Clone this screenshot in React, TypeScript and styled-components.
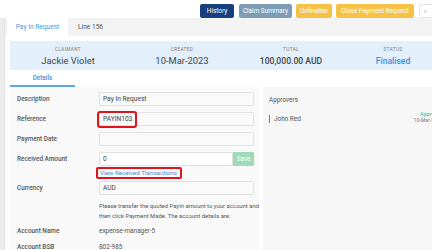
import React from "react";
import styled, { createGlobalStyle } from "styled-components";

const GlobalStyle = createGlobalStyle`
  html, body {
    margin: 0;
    padding: 0;
    overflow: hidden;
    background: #fff;
    font-family: Roboto, "Liberation Sans", sans-serif;
  }
`;

type BtnKind = "navy" | "slate" | "amber";

const btnColors: Record<BtnKind, string> = {
  navy: "#173f7e",
  slate: "#7d9db7",
  amber: "#f6c246",
};

const App = (): JSX.Element => {
  return (
    <Page>
      <GlobalStyle />
      <TopBar>
        <ActionButton kind="navy" w={34}>
          History
        </ActionButton>
        <ActionButton kind="slate" w={53}>
          Claim Summary
        </ActionButton>
        <ActionButton kind="amber" w={36}>
          Unfinalise
        </ActionButton>
        <ActionButton kind="amber" w={78}>
          Close Payment Request
        </ActionButton>
        <CollapseButton>‹</CollapseButton>
      </TopBar>
      <Main>
        <SideStrip />
        <Content>
          <TabBar>
            <Tab active>Pay In Request</Tab>
            <Tab>Line 156</Tab>
          </TabBar>
          <Sheet>
            <Banner>
              <Stat>
                <StatLabel>CLAIMANT</StatLabel>
                <StatValue>Jackie Violet</StatValue>
              </Stat>
              <Stat>
                <StatLabel>CREATED</StatLabel>
                <StatValue>10-Mar-2023</StatValue>
              </Stat>
              <Stat>
                <StatLabel>TOTAL</StatLabel>
                <StatValue strong>100,000.00 AUD</StatValue>
              </Stat>
              <Stat>
                <StatLabel>STATUS</StatLabel>
                <StatValue strong accent>
                  Finalised
                </StatValue>
              </Stat>
            </Banner>
            <SubTabs>
              <SubTab>Details</SubTab>
            </SubTabs>
            <Body>
              <FormPanel>
                <Row>
                  <Label>Description</Label>
                  <Field>Pay In Request</Field>
                </Row>
                <Row>
                  <Label>Reference</Label>
                  <Field>
                    <Marked>PAYIN103</Marked>
                  </Field>
                </Row>
                <Row>
                  <Label>Payment Date</Label>
                  <Field />
                </Row>
                <Row tight>
                  <Label>Received Amount</Label>
                  <AmountGroup>
                    <Field white>0</Field>
                    <SaveButton>Save</SaveButton>
                  </AmountGroup>
                </Row>
                <LinkRow>
                  <MarkedLink>View Received Transactions</MarkedLink>
                </LinkRow>
                <Row>
                  <Label>Currency</Label>
                  <Field>AUD</Field>
                </Row>
                <Note>
                  Please transfer the quoted PayIn amount to your account and
                  then click Payment Made. The account details are:
                </Note>
                <Row plain>
                  <Label>Account Name</Label>
                  <Value>expense-manager-5</Value>
                </Row>
                <Row plain>
                  <Label>Account BSB</Label>
                  <Value>802-985</Value>
                </Row>
              </FormPanel>
              <SidePanel>
                <SideTitle>Approvers</SideTitle>
                <Approver>
                  <ApproverName>John Red</ApproverName>
                  <ApproverState>
                    <Approved>Approved</Approved>
                    <ApprovedDate>10-Mar-2023</ApprovedDate>
                  </ApproverState>
                </Approver>
              </SidePanel>
            </Body>
          </Sheet>
        </Content>
      </Main>
    </Page>
  );
};

const Page = styled.div`
  width: 450px;
  height: 250px;
  overflow: hidden;
  display: flex;
  flex-direction: column;
`;

const TopBar = styled.div`
  height: 22px;
  display: flex;
  align-items: flex-start;
  padding: 4px 0 0 200px;
  gap: 4px;
  box-sizing: border-box;
`;

const ActionButton = styled.button<{ kind: BtnKind; w: number }>`
  width: ${(p) => p.w}px;
  height: 14px;
  padding: 0;
  border: none;
  border-radius: 2px;
  background: ${(p) => btnColors[p.kind]};
  color: #fff;
  font-family: Roboto, sans-serif;
  font-size: 6.4px;
  line-height: 14px;
  white-space: nowrap;
  &:first-child {
    margin-right: 1px;
  }
`;

const CollapseButton = styled.button`
  margin-left: 1px;
  width: 22px;
  height: 14px;
  padding: 0 0 0 4px;
  border: 1px solid #e4e4e4;
  border-radius: 2px;
  background: #fff;
  color: #999;
  font-size: 7px;
  line-height: 11px;
  text-align: left;
`;

const Main = styled.div`
  flex: 1;
  display: flex;
`;

const SideStrip = styled.div`
  width: 4px;
  background: #ececec;
  border-right: 1px solid #e2e2e2;
`;

const Content = styled.div`
  flex: 1;
  display: flex;
  flex-direction: column;
`;

const TabBar = styled.div`
  height: 18px;
  display: flex;
  padding-left: 2px;
  background: #f3f3f3;
`;

const Tab = styled.div<{ active?: boolean }>`
  width: 61px;
  display: flex;
  align-items: center;
  justify-content: ${(p) => (p.active ? "center" : "flex-start")};
  padding-left: ${(p) => (p.active ? "0" : "10px")};
  background: ${(p) => (p.active ? "#fff" : "transparent")};
  color: ${(p) => (p.active ? "#4a9de0" : "#555")};
  font-size: 6.6px;
`;

const Sheet = styled.div`
  flex: 1;
  padding: 5px 0 0 5px;
  display: flex;
  flex-direction: column;
`;

const Banner = styled.div`
  height: 29px;
  display: grid;
  grid-template-columns: 116px 112px 106px 98px;
  background: #e3f0fc;
`;

const Stat = styled.div`
  display: flex;
  flex-direction: column;
  align-items: center;
  padding-top: 6px;
`;

const StatLabel = styled.div`
  font-size: 4.6px;
  letter-spacing: 0.4px;
  color: #777;
  line-height: 6px;
`;

const StatValue = styled.div<{ strong?: boolean; accent?: boolean }>`
  margin-top: 2px;
  font-size: ${(p) => (p.strong ? "8.6px" : "9.4px")};
  line-height: 12px;
  font-weight: ${(p) => (p.strong ? 500 : 400)};
  color: ${(p) => (p.accent ? "#3b8fd9" : "#444")};
`;

const SubTabs = styled.div`
  height: 17px;
  display: flex;
`;

const SubTab = styled.div`
  width: 65px;
  display: flex;
  align-items: center;
  justify-content: center;
  padding-top: 1px;
  border-bottom: 2px solid #5aa8e8;
  color: #3f95dd;
  font-size: 6.4px;
  font-weight: 500;
  box-sizing: border-box;
`;

const Body = styled.div`
  flex: 1;
  display: grid;
  grid-template-columns: 249px 1fr;
  gap: 4px;
`;

const FormPanel = styled.div`
  background: #f9f9f9;
  padding: 5px 5px 0 7px;
  display: flex;
  flex-direction: column;
`;

const Row = styled.div<{ tight?: boolean; plain?: boolean }>`
  display: grid;
  grid-template-columns: 82px 155px;
  align-items: center;
  height: 14px;
  margin-bottom: ${(p) => (p.tight ? "0" : p.plain ? "2px" : "6px")};
`;

const Label = styled.div`
  font-size: 6.4px;
  font-weight: 500;
  color: #555;
`;

const Field = styled.div<{ white?: boolean }>`
  height: 14px;
  display: flex;
  align-items: center;
  padding-left: 3px;
  border: 1px solid #e1e1e1;
  border-radius: 1px;
  background: ${(p) => (p.white ? "#fff" : "#fafafa")};
  color: #444;
  font-size: 6.6px;
  box-sizing: border-box;
  flex: 1;
`;

const Marked = styled.span`
  margin-left: -6px;
  padding: 2px 3px 2px 4px;
  border: 2px solid #e0141e;
  border-radius: 3px;
  line-height: 9px;
`;

const AmountGroup = styled.div`
  display: flex;
`;

const SaveButton = styled.div`
  width: 21px;
  height: 14px;
  display: flex;
  align-items: center;
  justify-content: center;
  background: #9ddcb8;
  color: #fff;
  font-size: 6.4px;
  border-radius: 0 1px 1px 0;
`;

const LinkRow = styled.div`
  height: 13px;
  display: flex;
  align-items: center;
  padding-left: 79px;
  margin-bottom: 2px;
`;

const MarkedLink = styled.span`
  padding: 0 3px 0 2px;
  border: 2px solid #e0141e;
  border-radius: 2px;
  color: #4a8fd6;
  font-size: 6.2px;
  line-height: 8px;
`;

const Note = styled.p`
  margin: 0 0 3px 82px;
  width: 162px;
  font-size: 5.9px;
  line-height: 10px;
  color: #555;
`;

const Value = styled.div`
  font-size: 6.4px;
  color: #555;
`;

const SidePanel = styled.div`
  background: #f6f6f6;
  padding: 9px 0 0 6px;
`;

const SideTitle = styled.div`
  font-size: 6.4px;
  color: #555;
  margin-bottom: 7px;
`;

const Approver = styled.div`
  display: flex;
  justify-content: space-between;
  align-items: flex-start;
  width: 174px;
`;

const ApproverName = styled.div`
  margin-top: 4px;
  padding-left: 4px;
  border-left: 1.5px solid #3a86d0;
  font-size: 6.4px;
  line-height: 8px;
  color: #555;
`;

const ApproverState = styled.div`
  display: flex;
  flex-direction: column;
  align-items: flex-end;
  line-height: 6px;
`;

const Approved = styled.span`
  font-size: 5.4px;
  color: #3cb878;
`;

const ApprovedDate = styled.span`
  font-size: 5.2px;
  color: #777;
`;

export default App;
